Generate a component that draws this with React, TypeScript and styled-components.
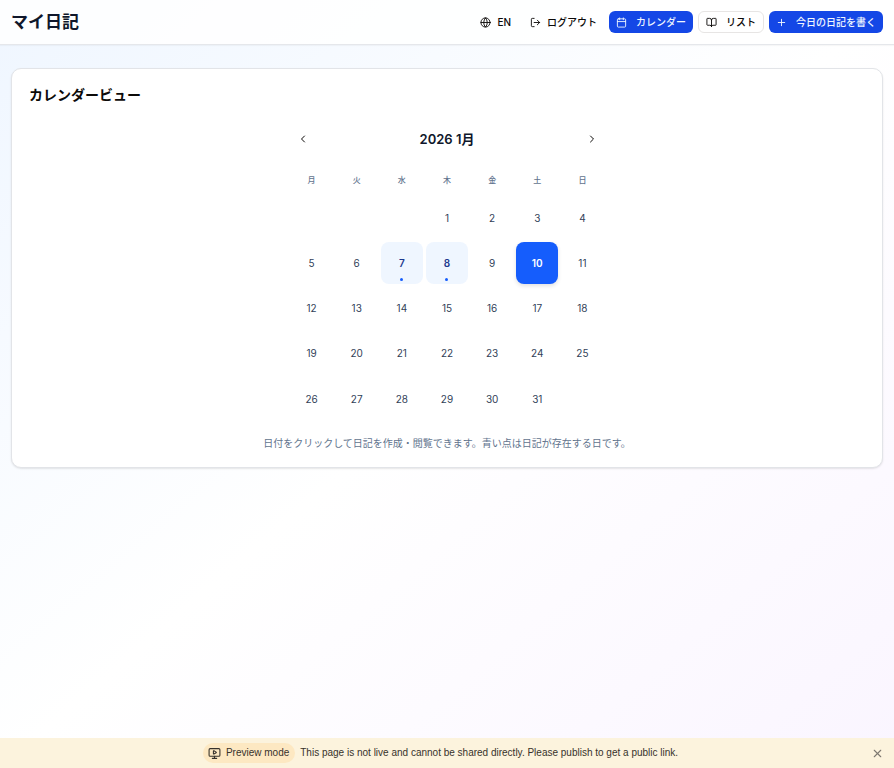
import React, { useState } from "react";
import styled, { createGlobalStyle, css } from "styled-components";
import {
  BookOpen,
  Calendar,
  ChevronLeft,
  ChevronRight,
  Globe,
  LogOut,
  MonitorPlay,
  Plus,
  X,
} from "lucide-react";

const GlobalStyle = createGlobalStyle`
  *, *::before, *::after { box-sizing: border-box; }
  body {
    margin: 0;
    font-family: Inter, "Noto Sans CJK JP", sans-serif;
    font-size: 10px;
    line-height: 14px;
    color: #0c0a09;
  }
  h1, h2, h3, p { margin: 0; }
  button { font: inherit; color: inherit; border: 0; background: none; cursor: pointer; }
`;

const Page = styled.div`
  min-height: 100vh;
  display: flex;
  flex-direction: column;
  background: linear-gradient(to bottom right, #eff6ff, #ffffff, #faf5ff);
`;

const Header = styled.header`
  display: flex;
  align-items: center;
  justify-content: space-between;
  padding: 11px;
  background: rgba(255, 255, 255, 0.85);
  border-bottom: 1px solid #e5e7eb;
  box-shadow: 0 1px 1px rgba(0, 0, 0, 0.03);
`;

const SiteTitle = styled.h1`
  font-size: 17px;
  line-height: 22px;
  font-weight: 700;
  color: #0f172b;
`;

const Actions = styled.nav`
  display: flex;
  align-items: center;
  gap: 5px;
`;

const ActionButton = styled.button<{ $variant: "ghost" | "primary" | "outline" }>`
  display: inline-flex;
  align-items: center;
  height: 22px;
  gap: 6px;
  padding: 0 7px;
  border-radius: 6px;
  font-weight: 500;
  white-space: nowrap;

  ${({ $variant }) =>
    $variant !== "ghost" &&
    css`
      gap: 9px;
    `}
  ${({ $variant }) =>
    $variant === "primary" &&
    css`
      background: #1447e6;
      color: #eff6ff;
    `}
  ${({ $variant }) =>
    $variant === "outline" &&
    css`
      background: #ffffff;
      border: 1px solid #e7e5e4;
    `}
`;

const Main = styled.main`
  flex: 1;
  padding: 23px 11px;
`;

const Card = styled.section`
  padding: 17px;
  background: #ffffff;
  border: 1px solid #e2e4e8;
  border-radius: 10px;
  box-shadow: 0 1px 2px rgba(0, 0, 0, 0.1);
`;

const CardTitle = styled.h2`
  font-size: 14px;
  line-height: 18px;
  font-weight: 700;
`;

const CalendarBox = styled.div`
  max-width: 313px;
  margin: 24px auto 0;
`;

const MonthBar = styled.div`
  display: flex;
  align-items: center;
  justify-content: space-between;
`;

const MonthTitle = styled.h3`
  font-size: 13px;
  line-height: 20px;
  font-weight: 600;
  color: #0f172b;
`;

const MonthButton = styled.button`
  display: flex;
  align-items: center;
  justify-content: center;
  width: 24px;
  height: 22px;
  padding: 0;
  border-radius: 6px;
`;

const MonthTable = styled.table`
  display: block;
  margin-top: 24px;

  thead, tbody { display: grid; gap: 3px; }
  tbody { margin-top: 11px; }
  tr {
    display: grid;
    grid-template-columns: repeat(7, 1fr);
    gap: 3px;
  }
  th, td { display: block; padding: 0; }
`;

const Weekday = styled.th`
  font-size: 8px;
  line-height: 12px;
  font-weight: 500;
  text-align: center;
  color: #62748e;
`;

const DayButton = styled.button<{ $entry: boolean; $selected: boolean }>`
  position: relative;
  display: flex;
  align-items: center;
  justify-content: center;
  width: 100%;
  aspect-ratio: 1;
  padding: 0;
  border-radius: 8px;
  color: #314158;

  ${({ $entry }) =>
    $entry &&
    css`
      background: #eff6ff;
      color: #1c398e;
      font-weight: 600;
    `}
  ${({ $selected }) =>
    $selected &&
    css`
      background: #155dfc;
      color: #ffffff;
      font-weight: 600;
      box-shadow: 0 2px 4px rgba(0, 0, 0, 0.12);
    `}
`;

const EntryDot = styled.span`
  position: absolute;
  bottom: 3px;
  left: 50%;
  width: 3px;
  height: 3px;
  margin-left: -2px;
  border-radius: 50%;
  background: #155dfc;
`;

const Hint = styled.p`
  margin-top: 16px;
  text-align: center;
  color: #62748e;
`;

const PreviewBar = styled.aside`
  display: flex;
  align-items: center;
  height: 30px;
  padding: 0 10px;
  background: #fcf3dd;
  color: #37322b;
  font-family: "Liberation Sans", Arial, sans-serif;
`;

const PreviewMessage = styled.div`
  flex: 1;
  display: flex;
  align-items: center;
  justify-content: center;
  gap: 5px;
`;

const PreviewBadge = styled.span`
  display: flex;
  align-items: center;
  gap: 5px;
  height: 20px;
  padding: 0 6px 0 5px;
  border-radius: 10px;
  background: #fde8c2;
`;

const CloseButton = styled.button`
  display: flex;
  padding: 0;
  color: #7d7870;
`;

const weekdays = ["月", "火", "水", "木", "金", "土", "日"];
const entryDays = [7, 8];
const leadingBlanks = 3;
const weeks = Array.from({ length: 5 }, (_, week) =>
  Array.from({ length: 7 }, (_, column) => week * 7 + column - leadingBlanks + 1)
);

export default function App() {
  const [selected, setSelected] = useState(10);
  const [previewShown, setPreviewShown] = useState(true);

  return (
    <>
      <GlobalStyle />
      <Page>
        <Header>
          <SiteTitle>マイ日記</SiteTitle>
          <Actions>
            <ActionButton $variant="ghost">
              <Globe size={11} />
              EN
            </ActionButton>
            <ActionButton $variant="ghost">
              <LogOut size={11} />
              ログアウト
            </ActionButton>
            <ActionButton $variant="primary">
              <Calendar size={11} />
              カレンダー
            </ActionButton>
            <ActionButton $variant="outline">
              <BookOpen size={11} />
              リスト
            </ActionButton>
            <ActionButton $variant="primary">
              <Plus size={11} />
              今日の日記を書く
            </ActionButton>
          </Actions>
        </Header>

        <Main>
          <Card>
            <CardTitle>カレンダービュー</CardTitle>
            <CalendarBox>
              <MonthBar>
                <MonthButton aria-label="前の月">
                  <ChevronLeft size={12} />
                </MonthButton>
                <MonthTitle>2026 1月</MonthTitle>
                <MonthButton aria-label="次の月">
                  <ChevronRight size={12} />
                </MonthButton>
              </MonthBar>
              <MonthTable>
                <thead>
                  <tr>
                    {weekdays.map((name) => (
                      <Weekday key={name} scope="col">{name}</Weekday>
                    ))}
                  </tr>
                </thead>
                <tbody>
                  {weeks.map((days, week) => (
                    <tr key={week}>
                      {days.map((day) => (
                        <td key={day}>
                          {day >= 1 && day <= 31 && (
                            <DayButton
                              $entry={entryDays.includes(day)}
                              $selected={day === selected}
                              onClick={() => setSelected(day)}
                            >
                              {day}
                              {entryDays.includes(day) && <EntryDot />}
                            </DayButton>
                          )}
                        </td>
                      ))}
                    </tr>
                  ))}
                </tbody>
              </MonthTable>
            </CalendarBox>
            <Hint>日付をクリックして日記を作成・閲覧できます。青い点は日記が存在する日です。</Hint>
          </Card>
        </Main>

        {previewShown && (
          <PreviewBar>
            <PreviewMessage>
              <PreviewBadge>
                <MonitorPlay size={13} />
                Preview mode
              </PreviewBadge>
              <span>This page is not live and cannot be shared directly. Please publish to get a public link.</span>
            </PreviewMessage>
            <CloseButton aria-label="Close" onClick={() => setPreviewShown(false)}>
              <X size={13} />
            </CloseButton>
          </PreviewBar>
        )}
      </Page>
    </>
  );
}
